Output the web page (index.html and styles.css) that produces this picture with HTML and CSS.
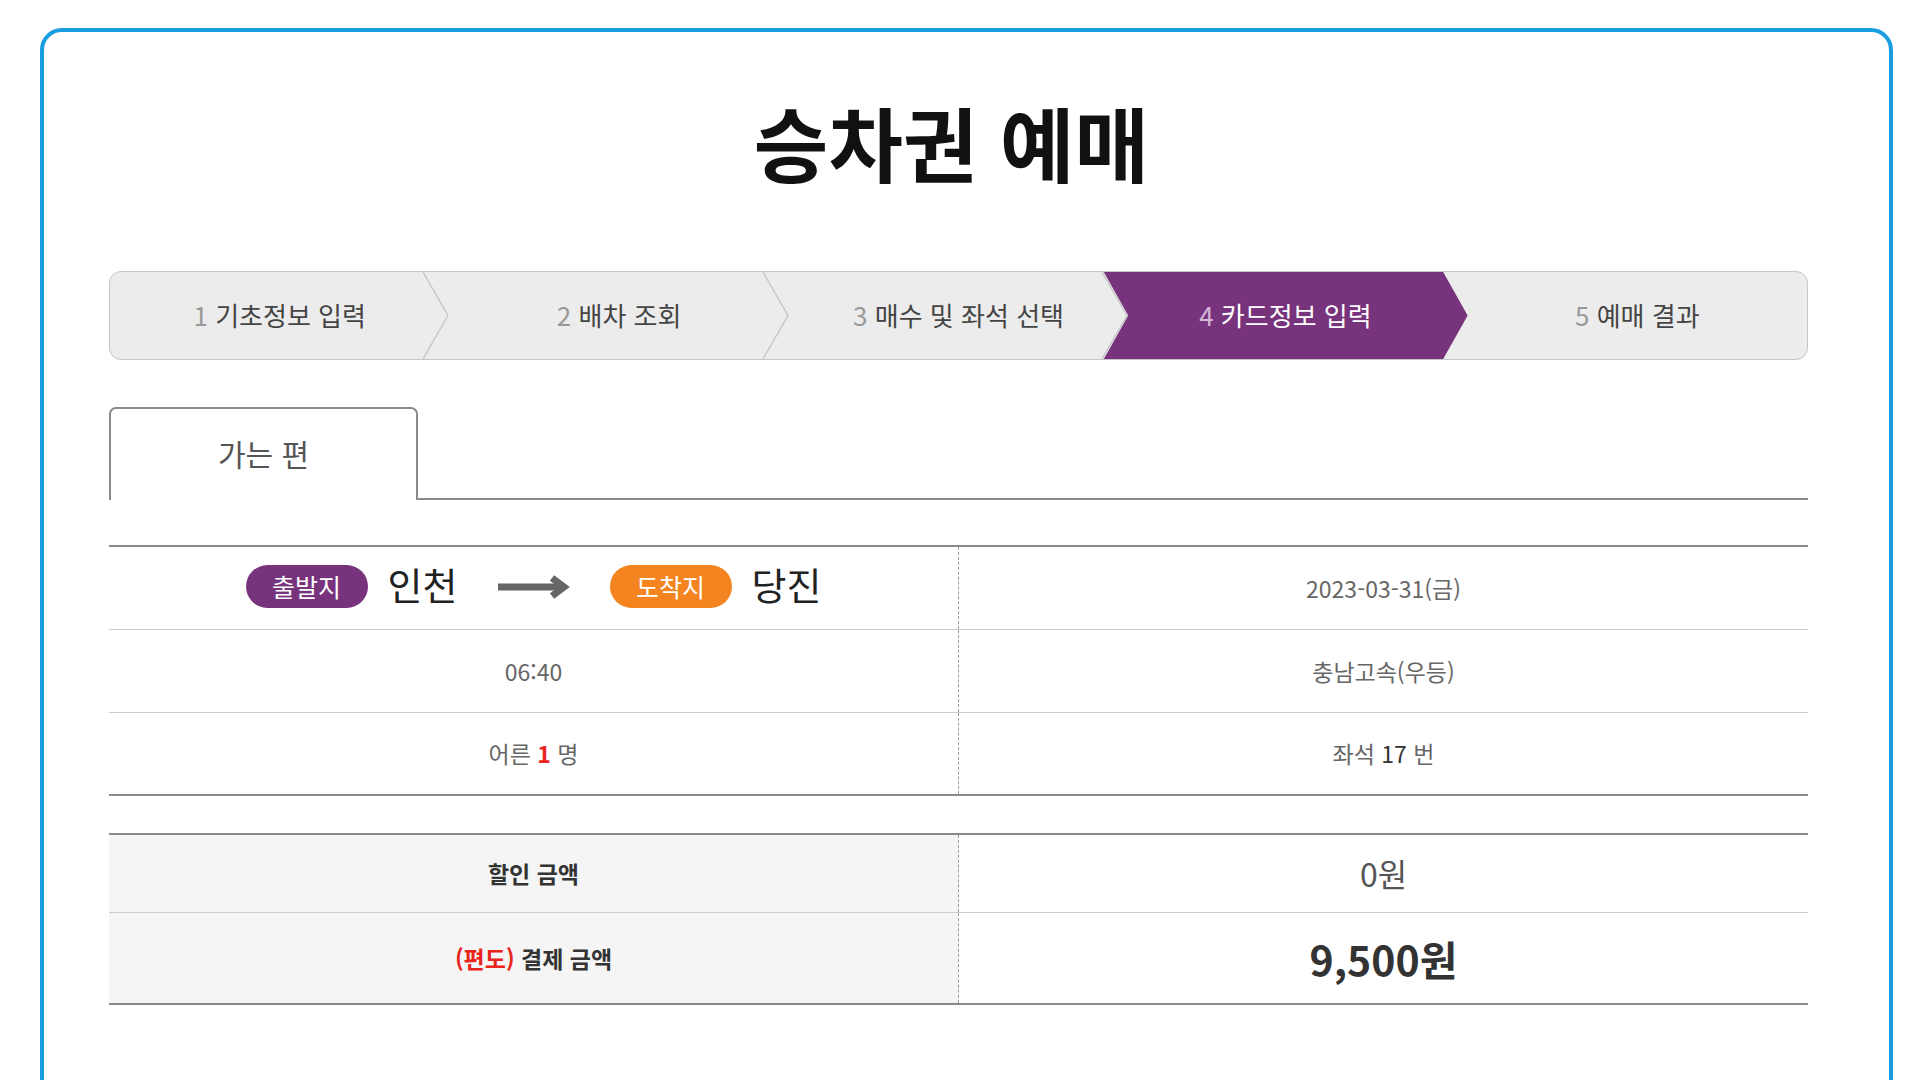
FILE: index.html
```html
<!DOCTYPE html>
<html lang="ko">
<head>
  <meta charset="UTF-8" />
  <meta name="viewport" content="width=device-width, initial-scale=1.0"/>
  <title>승차권 예매</title>
  <link rel="stylesheet" href="styles.css">
</head>
<body>

  <div class="frame">

    <!-- Title -->
    <h1 class="title">승차권 예매</h1>

    <!-- Step bar -->
    <ol class="steps">
      <li class="step">
        <span class="label"><span class="num">1</span> 기초정보 입력</span>
        <svg class="sep" viewBox="0 0 26 90" preserveAspectRatio="none"><polyline points="0,0 25,45 0,90"/></svg>
      </li>
      <li class="step">
        <span class="label"><span class="num">2</span> 배차 조회</span>
        <svg class="sep" viewBox="0 0 26 90" preserveAspectRatio="none"><polyline points="0,0 25,45 0,90"/></svg>
      </li>
      <li class="step">
        <span class="label"><span class="num">3</span> 매수 및 좌석 선택</span>
        <svg class="sep" viewBox="0 0 26 90" preserveAspectRatio="none"><polyline points="0,0 25,45 0,90"/></svg>
      </li>
      <li class="step active">
        <span class="label"><span class="num">4</span> 카드정보 입력</span>
      </li>
      <li class="step">
        <span class="label"><span class="num">5</span> 예매 결과</span>
      </li>
    </ol>

    <!-- Tabs -->
    <div class="tabs">
      <div class="tab">가는 편</div>
    </div>

    <!-- Trip info -->
    <table class="info">
      <tr>
        <td>
          <div class="route">
            <span class="pill dep">출발지</span>
            <span class="city">인천</span>
            <svg class="arrow" width="72" height="24" viewBox="0 0 72 24">
              <line x1="0" y1="12" x2="64" y2="12"/>
              <polyline points="54,3 66,12 54,21"/>
            </svg>
            <span class="pill arr">도착지</span>
            <span class="city">당진</span>
          </div>
        </td>
        <td>2023-03-31(금)</td>
      </tr>
      <tr>
        <td>06:40</td>
        <td>충남고속(우등)</td>
      </tr>
      <tr>
        <td>어른 <span class="count">1</span> 명</td>
        <td>좌석 <span class="seat">17</span> 번</td>
      </tr>
    </table>

    <!-- Price -->
    <table class="price">
      <tr class="discount">
        <th>할인 금액</th>
        <td>0원</td>
      </tr>
      <tr class="total">
        <th><span class="oneway">(편도)</span> 결제 금액</th>
        <td>9,500원</td>
      </tr>
    </table>

  </div>

</body>
</html>
```

FILE: styles.css
```css
* {
  margin: 0;
  padding: 0;
  box-sizing: border-box;
}

body {
  background: white;
  font-family: "Noto Sans CJK KR", "Noto Sans", sans-serif;
  color: #444;
  padding: 28px 27px 0 40px;
  overflow: hidden;
}

.frame {
  border: 4px solid #1a9ee2;
  border-radius: 22px;
  min-height: 1100px;
  padding: 0 81px 0 65px;
}

.title {
  text-align: center;
  font-size: 81px;
  font-weight: bold;
  color: #111;
  line-height: 110px;
  padding-top: 54px;
  padding-right: 14px;
}

/* step bar */
.steps {
  list-style: none;
  display: flex;
  height: 89px;
  margin-top: 75px;
  background: #ececec;
  border: 1px solid #c6c6c6;
  border-radius: 12px;
  overflow: hidden;
}

.step {
  flex: 1 1 0;
  min-width: 0;
  position: relative;
  display: flex;
  align-items: center;
  justify-content: center;
  font-size: 26px;
  color: #444;
}

.step .label {
  position: relative;
  padding-bottom: 2px;
}

.step .num {
  color: #999;
}

.step .sep {
  position: absolute;
  top: 0;
  right: 0;
  width: 26px;
  height: 100%;
}

.step .sep polyline {
  fill: none;
  stroke: #c2c2c2;
  stroke-width: 1.2;
  vector-effect: non-scaling-stroke;
}

.step.active {
  color: white;
  z-index: 1;
}

.step.active .label {
  margin-right: 25px;
}

.step.active::before {
  content: "";
  position: absolute;
  top: -1px;
  bottom: -1px;
  left: -25px;
  right: 0;
  background: #77337b;
  clip-path: polygon(0 0, calc(100% - 25px) 0, 100% 50%, calc(100% - 25px) 100%, 0 100%, 25px 50%);
}

.step.active .num {
  color: #d4b6d8;
}

/* tabs */
.tabs {
  display: flex;
  margin-top: 47px;
  border-bottom: 2px solid #8a8a8a;
}

.tab {
  width: 309px;
  height: 93px;
  margin-bottom: -2px;
  border: 2px solid #8a8a8a;
  border-bottom: none;
  border-radius: 7px 7px 0 0;
  background: white;
  display: flex;
  align-items: center;
  justify-content: center;
  font-size: 30px;
  color: #555;
  padding-bottom: 4px;
}

/* tables */
table {
  width: 100%;
  border-collapse: collapse;
  table-layout: fixed;
}

.info {
  margin-top: 45px;
  border-top: 2px solid #8a8a8a;
  border-bottom: 2px solid #8a8a8a;
}

.info td {
  height: 83px;
  text-align: center;
  font-size: 23px;
  color: #666;
  border-top: 1px solid #cccccc;
}

.info td + td,
.price td {
  border-left: 1px dashed #9a9a9a;
}

.route {
  display: flex;
  align-items: center;
  justify-content: center;
  gap: 20px;
  padding-bottom: 2px;
}

.pill {
  display: inline-flex;
  align-items: center;
  justify-content: center;
  width: 122px;
  height: 43px;
  border-radius: 22px;
  color: white;
  font-size: 25px;
  padding-bottom: 2px;
}

.pill.dep {
  background: #77337b;
}

.pill.arr {
  background: #f3841f;
}

.city {
  font-size: 38px;
  color: #222;
  padding-bottom: 6px;
}

.arrow {
  margin: 0 20px;
}

.arrow line,
.arrow polyline {
  fill: none;
  stroke: #666;
  stroke-width: 7;
}

.count {
  color: #e8241c;
  font-weight: bold;
}

.seat {
  color: #333;
}

.price {
  margin-top: 37px;
  border-top: 2px solid #8a8a8a;
  border-bottom: 2px solid #8a8a8a;
}

.price th {
  background: #f5f5f5;
  font-size: 23px;
  font-weight: bold;
  color: #333;
}

.price td {
  text-align: center;
}

.price .discount th,
.price .discount td {
  height: 78px;
}

.price .discount td {
  font-size: 32px;
  color: #555;
}

.price .total th,
.price .total td {
  height: 92px;
  border-top: 1px solid #cccccc;
}

.price .total td {
  font-size: 41px;
  font-weight: bold;
  color: #333;
}

.oneway {
  color: #e8241c;
}
```
